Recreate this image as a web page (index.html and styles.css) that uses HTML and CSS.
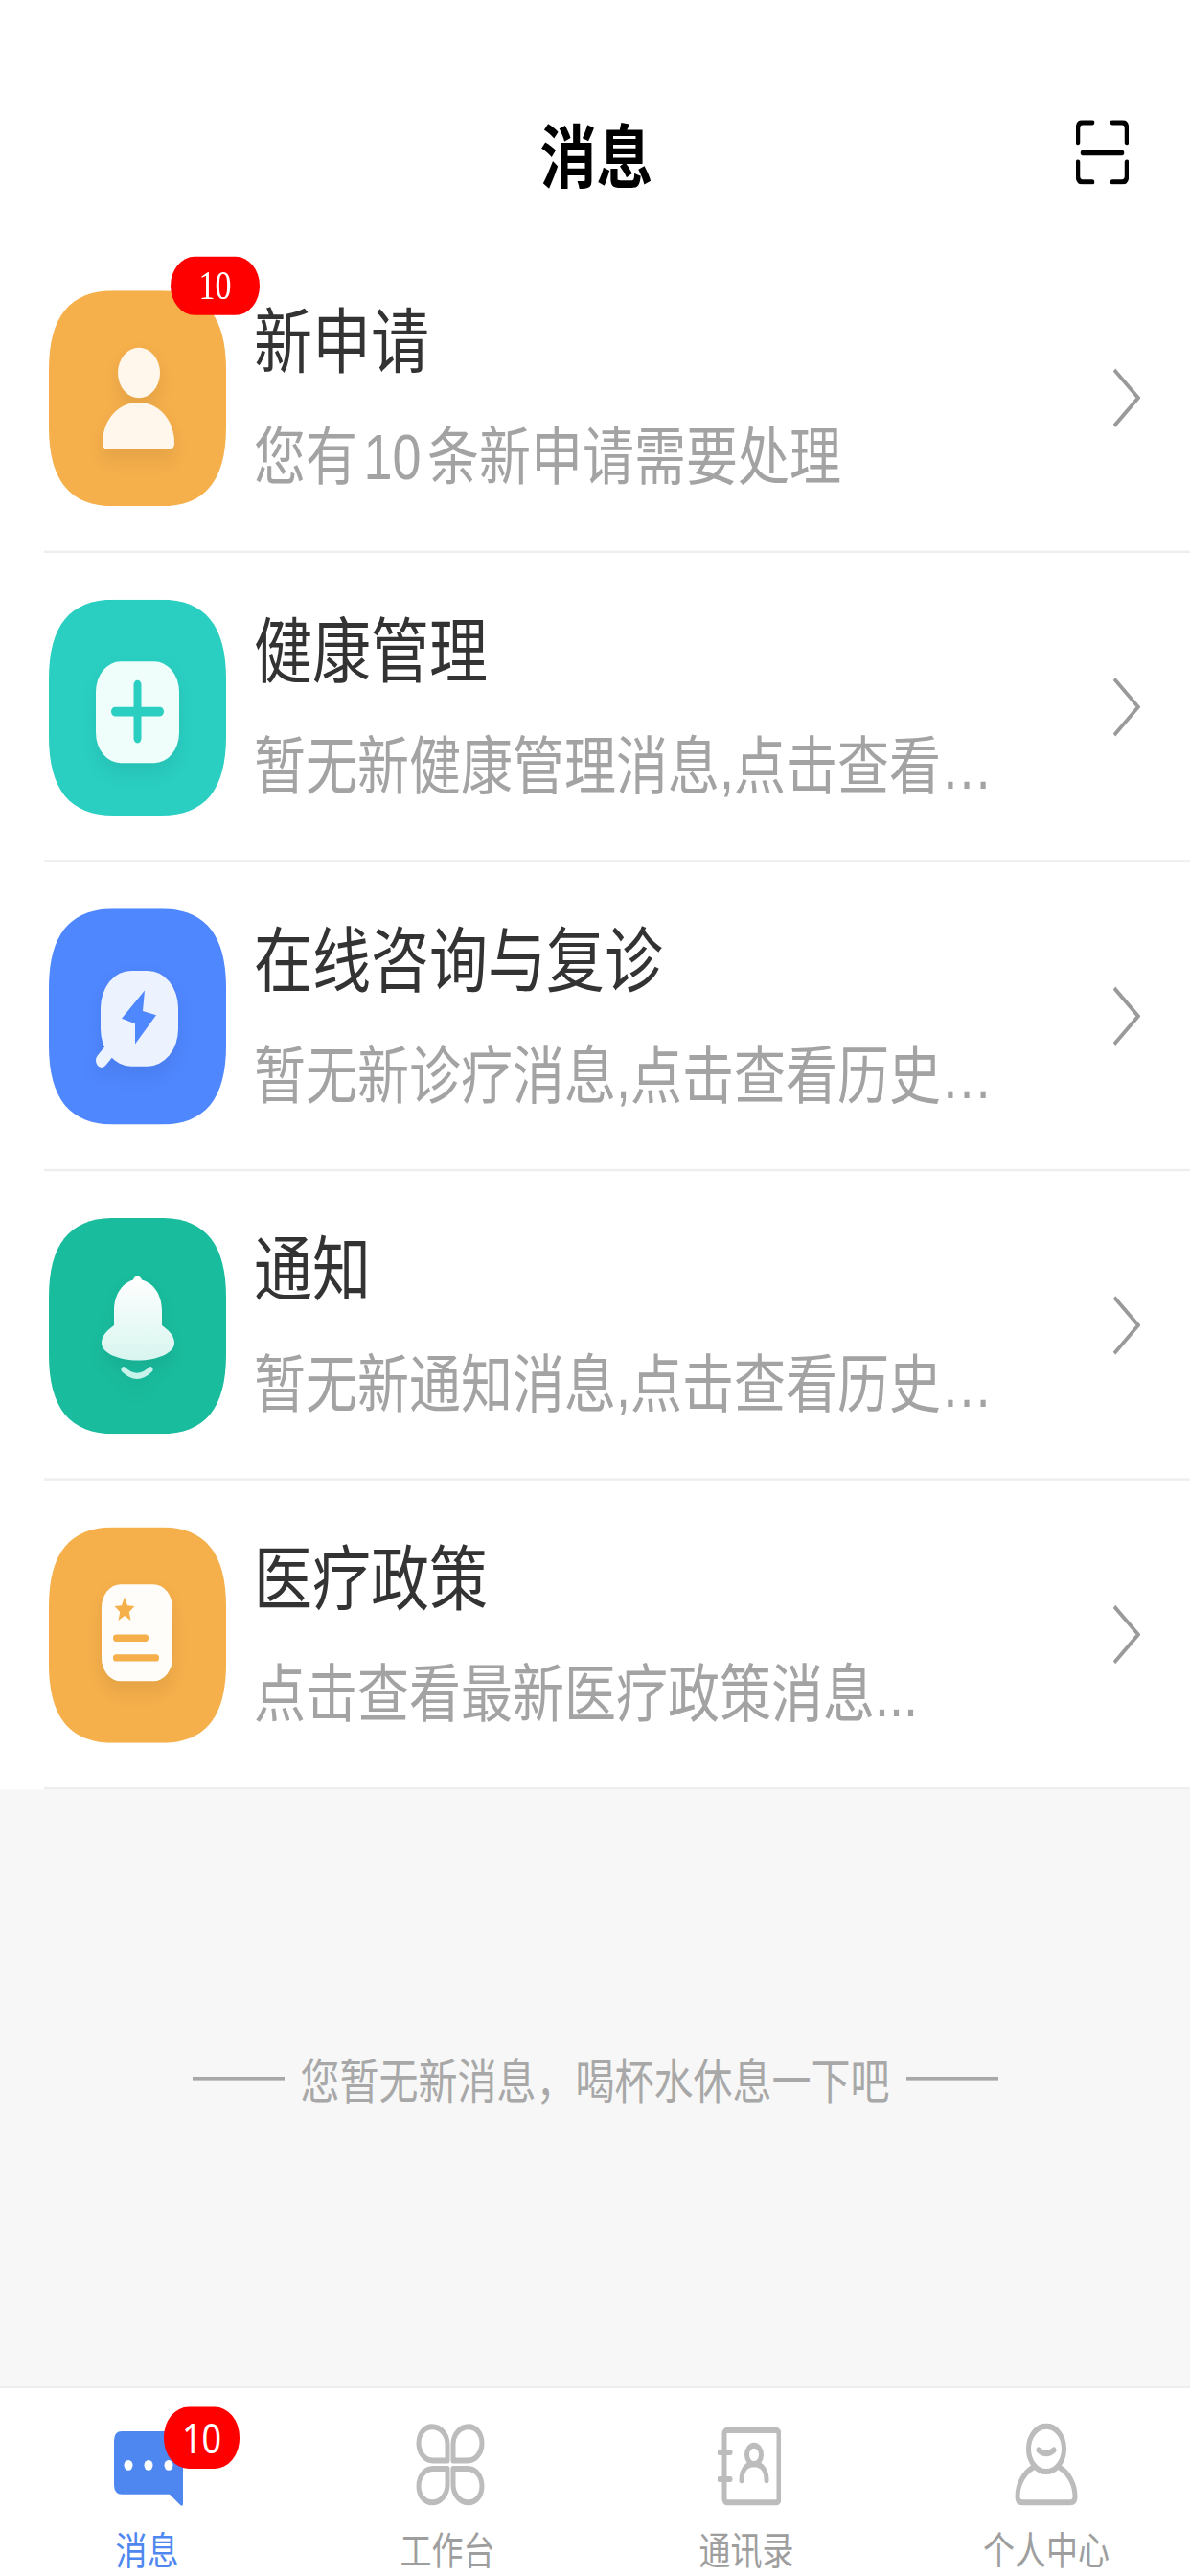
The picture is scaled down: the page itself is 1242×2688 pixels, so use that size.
FILE: index.html
```html
<html>
    <head>
        <meta name="viewport" content="width=device-width, initial-scale=1.0">
        <link rel="stylesheet" href="styles.css">
    </head>
    <body>
        <div class="screen">

            <div class="header">
                <div class="title">消息</div>
                <svg class="scan" viewBox="0 0 55 55">
                    <path d="M2 19V7q0-5 5-5h10M38 2h10q5 0 5 5v12M2 36v12q0 5 5 5h10M38 53h10q5 0 5-5V36M7 28h41"/>
                </svg>
            </div>

            <div class="list">
                <div class="row">
                    <div class="tile">
                        <svg viewBox="0 0 185 185">
                            <path d="M68 0h49c46 0 68 22 68 68v49c0 46-22 68-68 68H68c-46 0-68-22-68-68V68C0 22 22 0 68 0z" fill="#f5af4b"/>
                            <g class="glyph" fill="#fff7ec">
                                <ellipse cx="94" cy="70.500" rx="22" ry="21.500"/>
                                <path d="M56 131C56 111 72 96 93.500 96S131 111 131 131q0 5-5 5H61q-5 0-5-5z"/>
                            </g>
                        </svg>
                        <span class="badge">10</span>
                    </div>
                    <div class="text">
                        <div class="name">新申请</div>
                        <div class="sub">您有 10 条新申请需要处理</div>
                    </div>
                    <svg class="chevron" viewBox="0 0 29 50"><path d="M2 1l25 24L2 49"/></svg>
                </div>

                <div class="row">
                    <div class="tile">
                        <svg viewBox="0 0 185 185">
                            <path d="M68 0h49c46 0 68 22 68 68v49c0 46-22 68-68 68H68c-46 0-68-22-68-68V68C0 22 22 0 68 0z" fill="#2acfc2"/>
                            <g class="glyph">
                                <rect x="49" y="53" width="87" height="87" rx="26" fill="#effdfb"/>
                                <path d="M69 96h47M92.500 73v46" stroke="#2acfc2" stroke-width="8" stroke-linecap="round"/>
                            </g>
                        </svg>
                    </div>
                    <div class="text">
                        <div class="name">健康管理</div>
                        <div class="sub">暂无新健康管理消息,点击查看…</div>
                    </div>
                    <svg class="chevron" viewBox="0 0 29 50"><path d="M2 1l25 24L2 49"/></svg>
                </div>

                <div class="row">
                    <div class="tile">
                        <svg viewBox="0 0 185 185">
                            <path d="M68 0h49c46 0 68 22 68 68v49c0 46-22 68-68 68H68c-46 0-68-22-68-68V68C0 22 22 0 68 0z" fill="#4f87ff"/>
                            <g class="glyph">
                                <path d="M55 130l9-9" stroke="#edf3fe" stroke-width="12" stroke-linecap="round"/>
                                <rect x="54" y="53" width="81" height="82" rx="32" fill="#edf3fe"/>
                                <path d="M100 70L76 94l14 4.500V116l22-25-14-3.500z" fill="#4f87ff"/>
                            </g>
                        </svg>
                    </div>
                    <div class="text">
                        <div class="name">在线咨询与复诊</div>
                        <div class="sub">暂无新诊疗消息,点击查看历史…</div>
                    </div>
                    <svg class="chevron" viewBox="0 0 29 50"><path d="M2 1l25 24L2 49"/></svg>
                </div>

                <div class="row">
                    <div class="tile">
                        <svg viewBox="0 0 185 185">
                            <defs>
                                <linearGradient id="bell" x1="0" y1="0" x2="0" y2="1">
                                    <stop offset="0" stop-color="#ffffff"/>
                                    <stop offset="1" stop-color="#d8f5ef"/>
                                </linearGradient>
                            </defs>
                            <path d="M68 0h49c46 0 68 22 68 68v49c0 46-22 68-68 68H68c-46 0-68-22-68-68V68C0 22 22 0 68 0z" fill="#1abc9e"/>
                            <g class="glyph">
                                <path d="M92 50c3 0 4 1 5 3 13 3 21 13 21 27v12c7 4 13 9 13 15 0 9-18 15-38 15s-38-6-38-15c0-6 6-11 13-15V80c0-14 8-24 20-27 1-2 2-3 4-3z" fill="url(#bell)"/>
                                <path d="M78 130q14 11 28 0" fill="none" stroke="#c8f3ea" stroke-width="5" stroke-linecap="round"/>
                            </g>
                        </svg>
                    </div>
                    <div class="text">
                        <div class="name">通知</div>
                        <div class="sub">暂无新通知消息,点击查看历史…</div>
                    </div>
                    <svg class="chevron" viewBox="0 0 29 50"><path d="M2 1l25 24L2 49"/></svg>
                </div>

                <div class="row">
                    <div class="tile">
                        <svg viewBox="0 0 185 185">
                            <path d="M68 0h49c46 0 68 22 68 68v49c0 46-22 68-68 68H68c-46 0-68-22-68-68V68C0 22 22 0 68 0z" fill="#f5af4b"/>
                            <g class="glyph">
                                <rect x="55" y="49" width="74" height="83" rx="20" fill="#fffdf9"/>
                                <path d="M79 60l3 7 7.500.700-5.700 5 1.700 7.300L79 76l-6.500 4 1.700-7.300-5.700-5 7.500-.700z" fill="#f5af4b"/>
                                <path d="M70 95h31M70 112h42" stroke="#f5af4b" stroke-width="6" stroke-linecap="round"/>
                            </g>
                        </svg>
                    </div>
                    <div class="text">
                        <div class="name">医疗政策</div>
                        <div class="sub">点击查看最新医疗政策消息...</div>
                    </div>
                    <svg class="chevron" viewBox="0 0 29 50"><path d="M2 1l25 24L2 49"/></svg>
                </div>
            </div>

            <div class="empty">
                <div class="empty-text">您暂无新消息，喝杯水休息一下吧</div>
            </div>

            <div class="tabbar">
                <div class="tab active">
                    <div class="tab-icon">
                        <svg class="chat" viewBox="0 0 72 64">
                            <path d="M8 0h56q8 0 8 8v54q0 3-3 1L58 54H8q-8 0-8-8V8q0-8 8-8z" fill="#4f87f0"/>
                            <circle cx="15" cy="29" r="4.500" fill="#fff"/>
                            <circle cx="36" cy="29" r="4.500" fill="#fff"/>
                            <circle cx="57" cy="29" r="4.500" fill="#fff"/>
                        </svg>
                        <span class="tab-badge">10</span>
                    </div>
                    <div class="tab-label">消息</div>
                </div>
                <div class="tab">
                    <div class="tab-icon">
                        <svg class="line-icon" width="72" height="71" viewBox="0 0 72 71">
                            <path d="M33 32H18C9 32 3 25 3 17 3 9 9 3 17 3c9 0 16 7 16 15z"/>
                            <path d="M39 32h15c9 0 15-7 15-15 0-8-6-14-14-14-9 0-16 7-16 15z"/>
                            <path d="M33 39H18C9 39 3 46 3 54c0 8 6 14 14 14 9 0 16-7 16-15z"/>
                            <path d="M39 39h15c9 0 15 7 15 15 0 8-6 14-14 14-9 0-16-7-16-15z"/>
                        </svg>
                    </div>
                    <div class="tab-label">工作台</div>
                </div>
                <div class="tab">
                    <div class="tab-icon">
                        <svg class="line-icon" width="66" height="68" viewBox="0 0 66 68">
                            <rect x="7" y="3" width="57" height="62" rx="3"/>
                            <path d="M2 22h11M2 45h11"/>
                            <ellipse cx="38" cy="24" rx="7.500" ry="8"/>
                            <path d="M25 46c0-9 5-14 13-14s13 5 13 14"/>
                        </svg>
                    </div>
                    <div class="tab-label">通讯录</div>
                </div>
                <div class="tab">
                    <div class="tab-icon">
                        <svg class="line-icon" width="66" height="71" viewBox="0 0 66 71">
                            <ellipse cx="33" cy="22" rx="18.500" ry="19.500"/>
                            <path d="M25 23q8 6 16 0"/>
                            <path d="M19 38C9 43 3 53 3 63q0 5 5 5h50q5 0 5-5c0-10-6-20-16-25"/>
                        </svg>
                    </div>
                    <div class="tab-label">个人中心</div>
                </div>
            </div>

        </div>
    </body>
</html>
```

FILE: styles.css
```css
html, body {
    margin: 0;
    padding: 0;
    background: #fff;
    overflow: hidden;
    font-family: "Noto Sans CJK SC", "Noto Sans", sans-serif;
}
/* the app draws on a 2208 tall canvas, stretched up to the device height */
.screen {
    width: 1242px;
    height: 2208px;
    display: flex;
    flex-direction: column;
    transform: scaleY(1.2174);
    transform-origin: top left;
}
.header {
    height: 209px;
    flex: none;
    display: grid;
    grid-template-columns: 1fr auto 1fr;
    align-items: center;
    padding: 52px 64px 0;
    box-sizing: border-box;
}
.title {
    grid-column: 2;
    font-size: 59px;
    line-height: 60px;
    font-weight: 700;
    color: #000;
    margin-left: 3px;
}
.scan {
    grid-column: 3;
    justify-self: end;
    width: 55px;
    height: 55px;
    fill: none;
    stroke: #000;
    stroke-width: 4.500;
    stroke-linecap: round;
}
.row {
    position: relative;
    height: 265px;
    box-sizing: border-box;
    margin-left: 46px;
    padding: 40px 52px 0 5px;
    border-bottom: 2px solid #eeeeee;
    display: flex;
    align-items: flex-start;
}
.tile {
    position: relative;
    width: 185px;
    height: 185px;
    flex: none;
}
.tile svg {
    display: block;
    width: 185px;
    height: 185px;
}
.glyph {
    filter: drop-shadow(0 8px 8px rgba(0, 0, 0, .07));
}
.badge {
    position: absolute;
    left: 127px;
    top: -29px;
    width: 93px;
    height: 50px;
    border-radius: 25px;
    background: #f00;
    color: #fff;
    text-align: center;
    font-family: "Liberation Serif", serif;
    font-size: 34px;
    line-height: 50px;
}
.text {
    flex: 1;
    margin-left: 29px;
}
.name {
    font-size: 61px;
    line-height: 80px;
    color: #333;
}
.sub {
    margin-top: 28px;
    font-family: "Liberation Sans", "Noto Sans CJK SC", sans-serif;
    font-size: 54px;
    line-height: 70px;
    word-spacing: -8.500px;
    color: #a3a3a3;
    white-space: nowrap;
}
.chevron {
    width: 29px;
    height: 52px;
    flex: none;
    align-self: center;
    margin-top: -40px;
    fill: none;
    stroke: #9a9a9a;
    stroke-width: 3.500;
}
.empty {
    flex: 1;
    background: #f7f7f7;
    display: flex;
    justify-content: center;
    padding-top: 222px;
    box-sizing: border-box;
}
.empty-text {
    display: flex;
    align-items: center;
    gap: 17px;
    height: 50px;
    font-size: 41px;
    color: #a8a8a8;
}
.empty-text::before, .empty-text::after {
    content: "";
    width: 96px;
    height: 3px;
    background: #a8a8a8;
}
.tabbar {
    height: 163px;
    flex: none;
    box-sizing: border-box;
    border-top: 2px solid #eeeeee;
    background: #fff;
    display: grid;
    grid-template-columns: 310px 320px 304px 316px;
}
.tab {
    padding-top: 27px;
    display: flex;
    flex-direction: column;
    align-items: center;
}
.tab-icon {
    position: relative;
    height: 74px;
    display: flex;
    align-items: flex-end;
}
.chat {
    display: block;
    width: 72px;
    height: 64px;
}
.line-icon {
    display: block;
    fill: none;
    stroke: #bcbcbc;
    stroke-width: 5;
    stroke-linecap: round;
    stroke-linejoin: round;
}
.tab-badge {
    position: absolute;
    left: 52px;
    top: -11px;
    width: 79px;
    height: 53px;
    border-radius: 26px;
    background: #f00;
    color: #fff;
    text-align: center;
    font-family: "Noto Sans", sans-serif;
    font-size: 36px;
    line-height: 53px;
}
.tab-label {
    margin-top: 16px;
    margin-right: 6px;
    font-size: 33px;
    line-height: 40px;
    color: #9e9e9e;
}
.tab:last-child .tab-label {
    margin-right: 0;
}
.tab.active .tab-label {
    color: #4f87f0;
    margin-right: 3px;
}
```
